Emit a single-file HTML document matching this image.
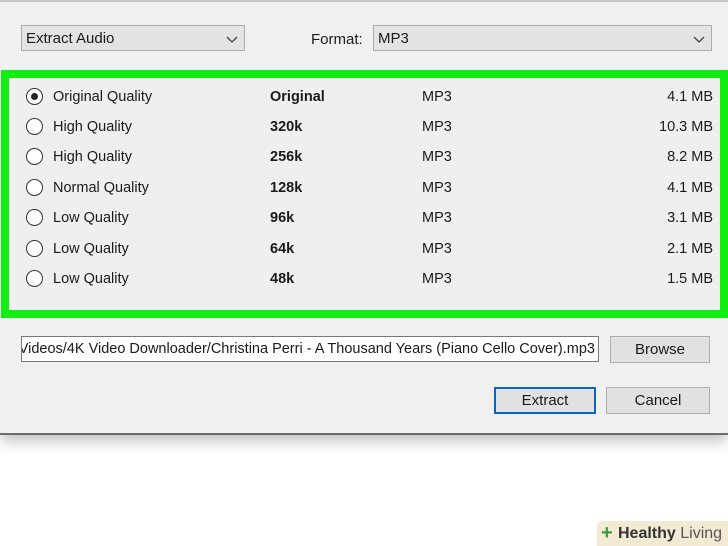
<!DOCTYPE html>
<html><head><style>
body{margin:0;width:728px;height:546px;background:#fff;position:relative;overflow:hidden;font-family:"Liberation Sans",sans-serif;color:#1a1a1a}
.dlg{position:absolute;left:0;top:0;width:728px;height:435px;background:#f0f0f0;border-top:2px solid #c8c8c8;border-bottom:2px solid #6a6a6a;box-sizing:border-box;box-shadow:0 6px 14px rgba(0,0,0,.25)}
.dd{position:absolute;height:26px;background:#e3e3e3;border:1px solid #acacac;box-sizing:border-box;font-size:15px;line-height:26px;padding-left:4px}
.dd svg{position:absolute;right:6px;top:10px}
.box{position:absolute;left:1px;top:68px;width:727px;height:248px;border:8px solid #11ee11;box-sizing:border-box;background:#efefef}
.row{position:absolute;left:0;height:20px;font-size:14.5px;width:100%}
.row span{position:absolute;top:0}
.r{width:17px;height:17px;border:1.5px solid #333;border-radius:50%;box-sizing:border-box;left:17px;top:-1px;position:absolute;background:#fff}
.r.on::after{content:"";position:absolute;left:3.5px;top:3.5px;width:7px;height:7px;border-radius:50%;background:#222}
.btn{position:absolute;background:#e1e1e1;border:1px solid #adadad;box-sizing:border-box;font-size:15px;text-align:center;line-height:25px}
</style></head><body>
<div class="dlg">
<div class="dd" style="left:21px;top:23px;width:224px">Extract Audio<svg width="12" height="7"><path d="M1 1 6 6 11 1" fill="none" stroke="#444" stroke-width="1.3"/></svg></div>
<div style="position:absolute;left:311px;top:29px;font-size:15px">Format:</div>
<div class="dd" style="left:373px;top:23px;width:339px">MP3<svg width="12" height="7"><path d="M1 1 6 6 11 1" fill="none" stroke="#444" stroke-width="1.3"/></svg></div>
<div class="box">
<div class="row" style="top:11px"><i class="r on"></i><span style="left:44px">Original Quality</span><b style="position:absolute;left:261px">Original</b><span style="left:413px">MP3</span><span style="right:7px">4.1 MB</span></div>
<div class="row" style="top:41px"><i class="r"></i><span style="left:44px">High Quality</span><b style="position:absolute;left:261px">320k</b><span style="left:413px">MP3</span><span style="right:7px">10.3 MB</span></div>
<div class="row" style="top:71px"><i class="r"></i><span style="left:44px">High Quality</span><b style="position:absolute;left:261px">256k</b><span style="left:413px">MP3</span><span style="right:7px">8.2 MB</span></div>
<div class="row" style="top:102px"><i class="r"></i><span style="left:44px">Normal Quality</span><b style="position:absolute;left:261px">128k</b><span style="left:413px">MP3</span><span style="right:7px">4.1 MB</span></div>
<div class="row" style="top:132px"><i class="r"></i><span style="left:44px">Low Quality</span><b style="position:absolute;left:261px">96k</b><span style="left:413px">MP3</span><span style="right:7px">3.1 MB</span></div>
<div class="row" style="top:163px"><i class="r"></i><span style="left:44px">Low Quality</span><b style="position:absolute;left:261px">64k</b><span style="left:413px">MP3</span><span style="right:7px">2.1 MB</span></div>
<div class="row" style="top:193px"><i class="r"></i><span style="left:44px">Low Quality</span><b style="position:absolute;left:261px">48k</b><span style="left:413px">MP3</span><span style="right:7px">1.5 MB</span></div>
</div>
<div style="position:absolute;left:21px;top:334px;width:578px;height:26px;background:#fff;border:1px solid #7a7a7a;box-sizing:border-box;font-size:14.5px;line-height:24px;overflow:hidden;white-space:nowrap;direction:rtl;padding-right:3px"><span style="direction:ltr;unicode-bidi:embed">C:/Users/Videos/4K Video Downloader/Christina Perri - A Thousand Years (Piano Cello Cover).mp3</span></div>
<div class="btn" style="left:610px;top:334px;width:100px;height:27px">Browse</div>
<div class="btn" style="left:494px;top:385px;width:102px;height:27px;border:2px solid #0a64c8;line-height:23px">Extract</div>
<div class="btn" style="left:606px;top:385px;width:104px;height:27px">Cancel</div>
</div>
<div style="position:absolute;left:597px;top:521px;width:131px;height:25px;background:#f3ead4;border-radius:5px 0 0 0;font-size:16px;line-height:25px;color:#333">
<span style="position:absolute;left:4px;top:0;color:#3a9a3a;font-weight:bold;font-size:20px">+</span><span style="position:absolute;left:21px"><b>Healthy</b> <span style="color:#555">Living</span></span></div>
</body></html>
